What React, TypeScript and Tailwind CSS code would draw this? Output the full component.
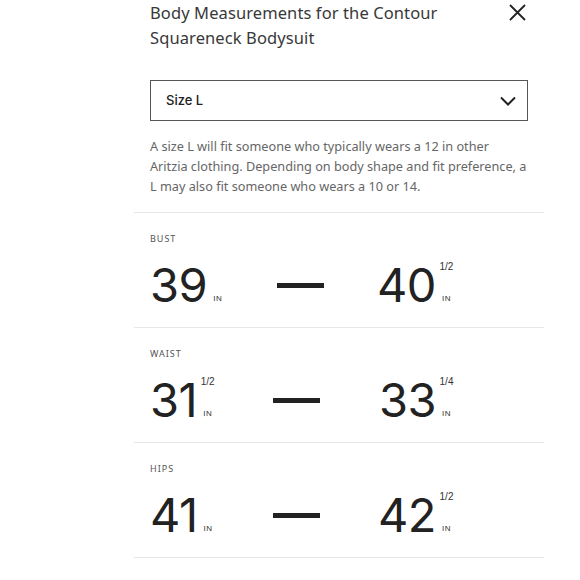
import React from "react";

type Val = { n: string; f?: string };
type Row = { label: string; from: Val; to: Val };

const rows: Row[] = [
  { label: "BUST", from: { n: "39" }, to: { n: "40", f: "1/2" } },
  { label: "WAIST", from: { n: "31", f: "1/2" }, to: { n: "33", f: "1/4" } },
  { label: "HIPS", from: { n: "41" }, to: { n: "42", f: "1/2" } },
];

function Value({ v }: { v: Val }) {
  return (
    <div className="flex items-stretch">
      <span
        className="text-[47px] leading-[48px] text-[#222] tracking-[-0.5px]"
        style={{ fontFamily: 'Inter, "Liberation Sans", sans-serif' }}
      >
        {v.n}
      </span>
      <div
        className="ml-[4px] flex w-[13px] flex-col items-center justify-between pt-[1px] pb-[6px] text-[#333]"
        style={{ fontFamily: '"Liberation Sans", Arial, sans-serif' }}
      >
        <span className="text-[10px] leading-[10px]">{v.f ?? "\u00a0"}</span>
        <span className="text-[8px] leading-[8px] tracking-[0.5px]">IN</span>
      </div>
    </div>
  );
}

export default function App() {
  return (
    <div
      className="h-[580px] w-[580px] overflow-hidden bg-white"
      style={{ fontFamily: '"Noto Sans", "Open Sans", sans-serif' }}
    >
      <div className="ml-[134px] w-[410px]">
        <div className="px-[16px]">
          <div className="flex items-start justify-between">
            <h1 className="text-[16.5px] leading-[25px] text-[#383838] tracking-[0.1px]">
              Body Measurements for the Contour
              <br />
              Squareneck Bodysuit
            </h1>
            <svg
              className="mt-[4px] mr-[2px]"
              width="17"
              height="17"
              viewBox="0 0 17 17"
              fill="none"
              stroke="#222"
              strokeWidth="1.8"
            >
              <path d="M1 1L16 16M16 1L1 16" />
            </svg>
          </div>
          <div className="mt-[30px] flex h-[41px] items-center justify-between border-[1.5px] border-[#555] pl-[15px] pr-[11px]">
            <span
              className="text-[13px] font-medium text-[#222]"
              style={{ fontFamily: 'Inter, "Noto Sans", sans-serif' }}
            >
              Size L
            </span>
            <svg width="16" height="10" viewBox="0 0 16 10" fill="none" stroke="#222" strokeWidth="2">
              <path d="M1 1.5L8 8.5L15 1.5" />
            </svg>
          </div>
          <p className="mt-[15px] whitespace-nowrap text-[12.7px] leading-[20px] text-[#666]">
            A size L will fit someone who typically wears a 12 in other
            <br />
            Aritzia clothing. Depending on body shape and fit preference, a
            <br />L may also fit someone who wears a 10 or 14.
          </p>
        </div>
        <div className="mt-[16px]">
          {rows.map((r) => (
            <div key={r.label} className="border-t border-[#e6e6e6] px-[16px] pt-[20px] pb-[18px]">
              <div
                className="text-[9px] leading-[12px] tracking-[1px] text-[#555]"
                style={{ fontFamily: '"Noto Sans", sans-serif' }}
              >
                {r.label}
              </div>
              <div className="mt-[16px] flex h-[48px] w-[303px] items-center justify-between">
                <Value v={r.from} />
                <div className="h-[5px] w-[47px] bg-[#222]" />
                <Value v={r.to} />
              </div>
            </div>
          ))}
          <div className="border-t border-[#e6e6e6]" />
        </div>
      </div>
    </div>
  );
}
